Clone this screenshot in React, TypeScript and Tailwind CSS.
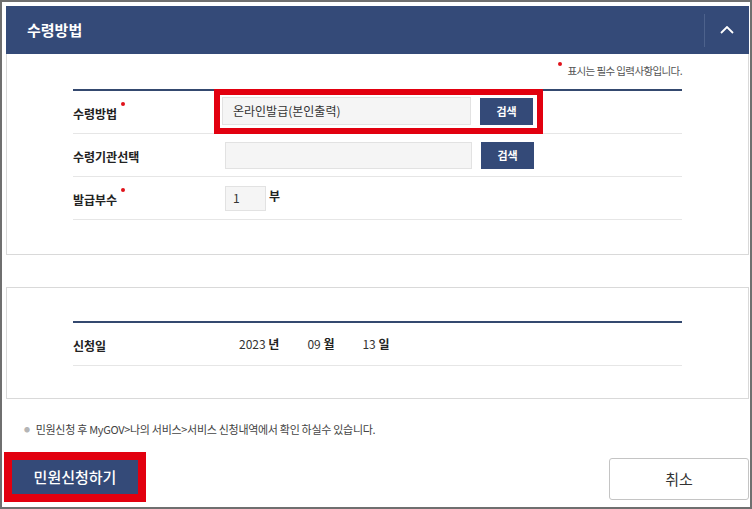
import React from "react";

const font = { fontFamily: '"Noto Sans CJK KR", "Noto Sans", sans-serif' };

const Dot = () => (
  <span className="absolute -right-[8px] -top-[3px] h-[4px] w-[4px] rounded-full bg-[#e0121b]" />
);

const Label: React.FC<{ text: string; required?: boolean }> = ({ text, required }) => (
  <div className="w-[152px] shrink-0">
    <span className="relative text-[12px] font-bold text-[#222]">
      {text}
      {required && <Dot />}
    </span>
  </div>
);

const SearchButton = () => (
  <button className="ml-[9px] flex h-[27px] w-[53px] items-center justify-center bg-[#344a78] text-[11px] font-bold text-white">
    검색
  </button>
);

const App: React.FC = () => {
  return (
    <div
      style={font}
      className="flex h-[509px] w-[752px] flex-col border-2 border-[#6f6f6f] bg-white pl-[4px] pr-[1px] pt-[4px]"
    >
      {/* 수령방법 section */}
      <div className="flex h-[48px] items-center bg-[#344a78] pl-[21px]">
        <h2 className="flex-1 text-[15px] font-bold text-white">수령방법</h2>
        <div className="flex h-[33px] w-[45px] items-center justify-center border-l border-[#4d628c]">
          <svg width="14" height="8" viewBox="0 0 14 8" fill="none">
            <polyline points="1,7 7,1 13,7" stroke="#fff" strokeWidth="1.8" />
          </svg>
        </div>
      </div>
      <div className="h-[201px] border border-t-0 border-[#d9d9d9] px-[66px]">
        <div className="mt-[9px] flex h-[16px] items-center justify-end">
          <span className="relative text-[10.5px] tracking-[-0.6px] text-[#555]">
            <span className="absolute -left-[9px] -top-[1px] h-[4px] w-[4px] rounded-full bg-[#e0121b]" />
            표시는 필수 입력사항입니다.
          </span>
        </div>
        <div className="mt-[10px] border-t-2 border-[#34496f]">
          <div className="flex h-[43px] items-center border-b border-[#e6e6e6]">
            <Label text="수령방법" required />
            <div className="-ml-[11px] -mt-[2px] flex h-[45px] items-center border-[6px] border-[#e2000f] pl-[2px] pr-[4px]">
              <div className="flex h-[28px] w-[249px] items-center border border-[#e2e2e2] bg-[#f5f5f5] pl-[10px] text-[12px] text-[#333]">
                온라인발급(본인출력)
              </div>
              <SearchButton />
            </div>
          </div>
          <div className="flex h-[43px] items-center border-b border-[#e6e6e6]">
            <Label text="수령기관선택" />
            <div className="h-[27px] w-[247px] border border-[#e2e2e2] bg-[#f5f5f5]" />
            <SearchButton />
          </div>
          <div className="flex h-[43px] items-center border-b border-[#e6e6e6]">
            <Label text="발급부수" required />
            <div className="flex h-[25px] w-[41px] items-center border border-[#e2e2e2] bg-[#f5f5f5] pl-[7px] text-[12px] text-[#333]">
              1
            </div>
            <span className="-mt-[4px] ml-[3px] text-[12px] font-bold text-[#222]">부</span>
          </div>
        </div>
      </div>

      {/* 신청일 section */}
      <div className="mt-[32px] h-[112px] border border-[#d9d9d9] px-[66px] pt-[33px]">
        <div className="border-t-2 border-[#34496f]">
          <div className="flex h-[43px] items-center border-b border-[#e6e6e6]">
            <Label text="신청일" />
            <div className="ml-[14px] flex items-center gap-[28px] text-[12px] text-[#333]">
              <span>
                2023 <b className="text-[#222]">년</b>
              </span>
              <span>
                09 <b className="text-[#222]">월</b>
              </span>
              <span>
                13 <b className="text-[#222]">일</b>
              </span>
            </div>
          </div>
        </div>
      </div>

      <p className="mt-[22px] flex h-[16px] items-center pl-[18px] text-[11px] tracking-[-0.3px] text-[#444]">
        <span className="mr-[6px] text-[6px] text-[#b5b5b5]">●</span>
        민원신청 후 MyGOV&gt;나의 서비스&gt;서비스 신청내역에서 확인 하실수 있습니다.
      </p>

      <div className="mt-[15px] flex items-start justify-between">
        <div className="-ml-[2px] border-[8px] border-[#e2000f]">
          <button className="flex h-[34px] w-[126px] items-center justify-center bg-[#344a78] text-[15px] font-medium text-white">
            민원신청하기
          </button>
        </div>
        <button className="mt-[6px] h-[42px] w-[140px] rounded-[3px] border border-[#c4c4c4] bg-white text-[15px] text-[#333]">
          취소
        </button>
      </div>
    </div>
  );
};

export default App;
